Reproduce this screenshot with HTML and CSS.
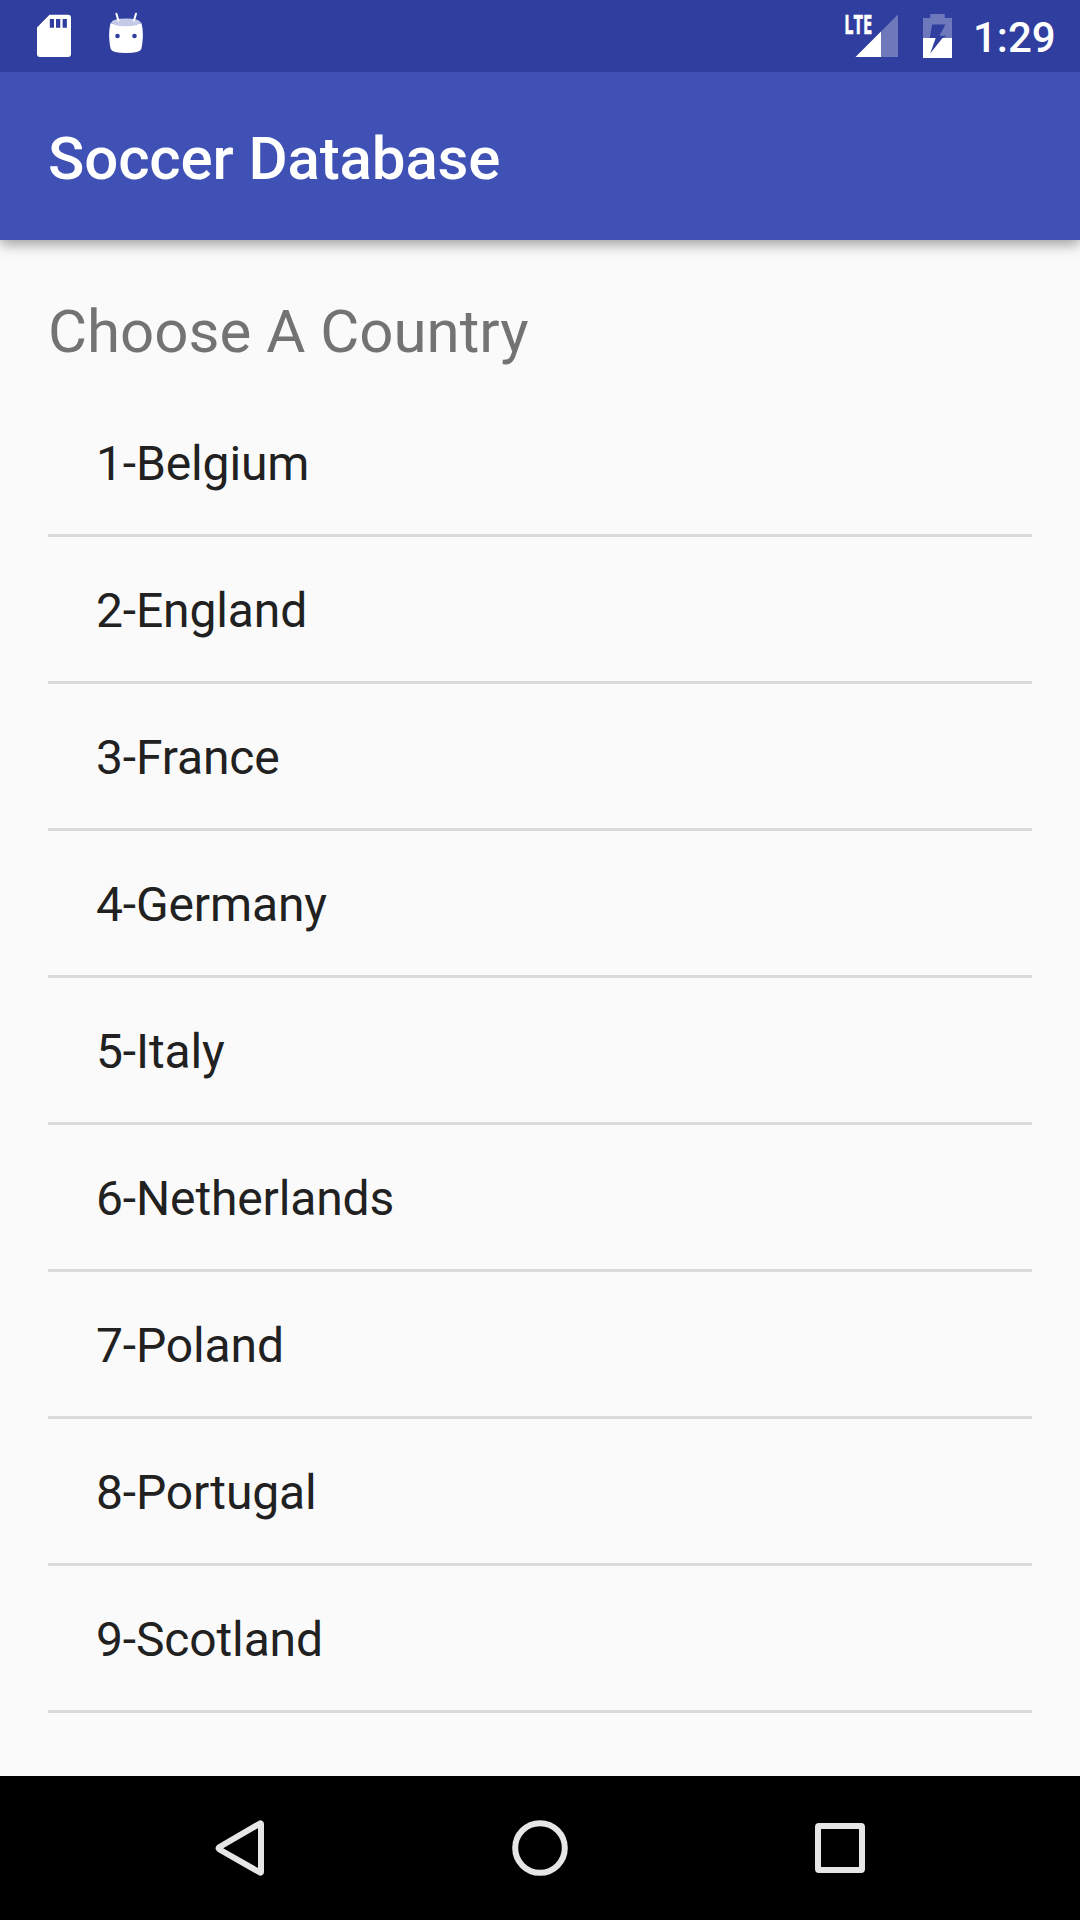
FILE: index.html
```html
<!DOCTYPE html>
<html lang="en">
<head>
<meta charset="utf-8">
<title>Soccer Database</title>
<link rel="stylesheet" href="styles.css">
</head>
<body>
<div class="screen">
  <div class="status-bar">
    <div class="status-group notifications">
      <svg width="34" height="72" viewBox="37 0 34 72">
        <path fill="#fff" fill-rule="evenodd" d="M49.5 14.7H68Q71 14.7 71 18V54Q71 57 68 57H40Q37 57 37 54V27.5ZM49.8 19V27.7H54V19ZM56 19V27.7H60.3V19ZM62.6 19V27.7H66.9V19Z"/>
      </svg>
      <svg width="34" height="72" viewBox="109 0 34 72">
        <path fill="#fff" d="M110.5 23Q126 29 141.5 23Q143.2 30 142.8 38Q142.5 44 141.3 49Q140 52.8 126 53Q112 52.8 110.7 49Q109.5 44 109.2 38Q108.8 30 110.5 23Z"/>
        <path fill="#c5cae9" d="M111 22.5Q113 18.7 126 18.5Q139 18.7 141 22.5Q138 26 126 26.2Q114 26 111 22.5Z"/>
        <path stroke="#fff" stroke-width="2" stroke-linecap="round" d="M116.4 13.7L118.4 20.5M136 13.7L134 20.5"/>
        <circle cx="117.5" cy="36" r="2.3" fill="#303f9f"/>
        <circle cx="134.5" cy="36" r="2.3" fill="#303f9f"/>
      </svg>
    </div>
    <div class="status-group">
      <svg width="55" height="72" viewBox="844 0 55 72">
        <path fill="#fff" fill-opacity=".3" d="M881 31.5L898 14.5V57H881Z"/>
        <path fill="#fff" d="M855.5 57L881 31.5V57Z"/>
        <text class="network-label" x="844.3" y="33.5" textLength="28" lengthAdjust="spacingAndGlyphs">LTE</text>
      </svg>
      <svg class="battery" width="29" height="72" viewBox="923 0 29 72">
        <path fill="#fff" fill-opacity=".3" fill-rule="evenodd" d="M930.3 14H944.7V18H952V38H942.5L947 35.8H939.5L945.4 24.5H932.2L929.8 38H923V18H930.3Z"/>
        <path fill="#fff" d="M923 38H935.7L930.2 53.5L942.5 38H952V58H923Z"/>
      </svg>
      <span class="clock">1:29</span>
    </div>
  </div>
  <header class="app-bar"><h1 class="app-title">Soccer Database</h1></header>
  <main class="content">
    <h2 class="prompt">Choose A Country</h2>
    <ul class="countries">
      <li class="country">1-Belgium</li>
      <li class="country">2-England</li>
      <li class="country">3-France</li>
      <li class="country">4-Germany</li>
      <li class="country">5-Italy</li>
      <li class="country">6-Netherlands</li>
      <li class="country">7-Poland</li>
      <li class="country">8-Portugal</li>
      <li class="country">9-Scotland</li>
    </ul>
  </main>
  <nav class="nav-bar">
    <svg width="60" height="60" viewBox="210 1818 60 60">
      <path class="nav-shape" d="M260 1823.5Q261 1823 261 1824V1872Q261 1873 260 1872.5L219.5 1849.5Q217.5 1848.3 219.5 1847Z"/>
    </svg>
    <svg width="60" height="60" viewBox="510 1818 60 60">
      <circle class="nav-shape" cx="540" cy="1848" r="24.8"/>
    </svg>
    <svg width="60" height="60" viewBox="810 1818 60 60">
      <rect class="nav-shape" x="818" y="1826" width="44" height="44" rx="1"/>
    </svg>
  </nav>
</div>
</body>
</html>
```
FILE: styles.css
```css
* {
  box-sizing: border-box;
}

body {
  margin: 0;
  font-family: Roboto, "Liberation Sans", sans-serif;
}

.screen {
  display: flex;
  flex-direction: column;
  width: 1080px;
  height: 1920px;
  background: #fafafa;
}

.status-bar {
  display: flex;
  justify-content: space-between;
  z-index: 1;
  height: 72px;
  padding: 0 24px 0 37px;
  background: #303f9f;
}

.status-group {
  display: flex;
}

.notifications {
  gap: 38px;
}

.network-label {
  fill: #fff;
  stroke: #fff;
  stroke-width: 0.6px;
  font: 700 26px "Open Sans", sans-serif;
}

.battery {
  margin-left: 24px;
}

.clock {
  width: 83px;
  margin-left: 21px;
  color: #fff;
  font-size: 42px;
  font-weight: 500;
  line-height: 75px;
  white-space: nowrap;
}

.app-bar {
  height: 168px;
  padding: 0 48px;
  background: #3f51b5;
  box-shadow: 0 5px 12px rgba(0, 0, 0, 0.35);
}

.app-title {
  margin: 0;
  color: #fff;
  font-size: 60px;
  font-weight: 500;
  letter-spacing: -0.12px;
  line-height: 173px;
}

.content {
  flex: 1;
  padding: 48px 48px 0;
}

.prompt {
  height: 102px;
  margin: 0;
  color: #737373;
  font-size: 60px;
  font-weight: 400;
  line-height: 88px;
}

.countries {
  margin: 0;
  padding: 0;
  list-style: none;
}

.country {
  height: 147px;
  padding-left: 48px;
  border-bottom: 3px solid #dadada;
  color: #212121;
  font-size: 48px;
  letter-spacing: -0.14px;
  line-height: 147px;
}

.nav-bar {
  display: flex;
  justify-content: center;
  align-items: center;
  gap: 240px;
  height: 144px;
  background: #000;
}

.nav-shape {
  fill: none;
  stroke: #e6e6e6;
  stroke-width: 6;
  stroke-linejoin: round;
}
```
